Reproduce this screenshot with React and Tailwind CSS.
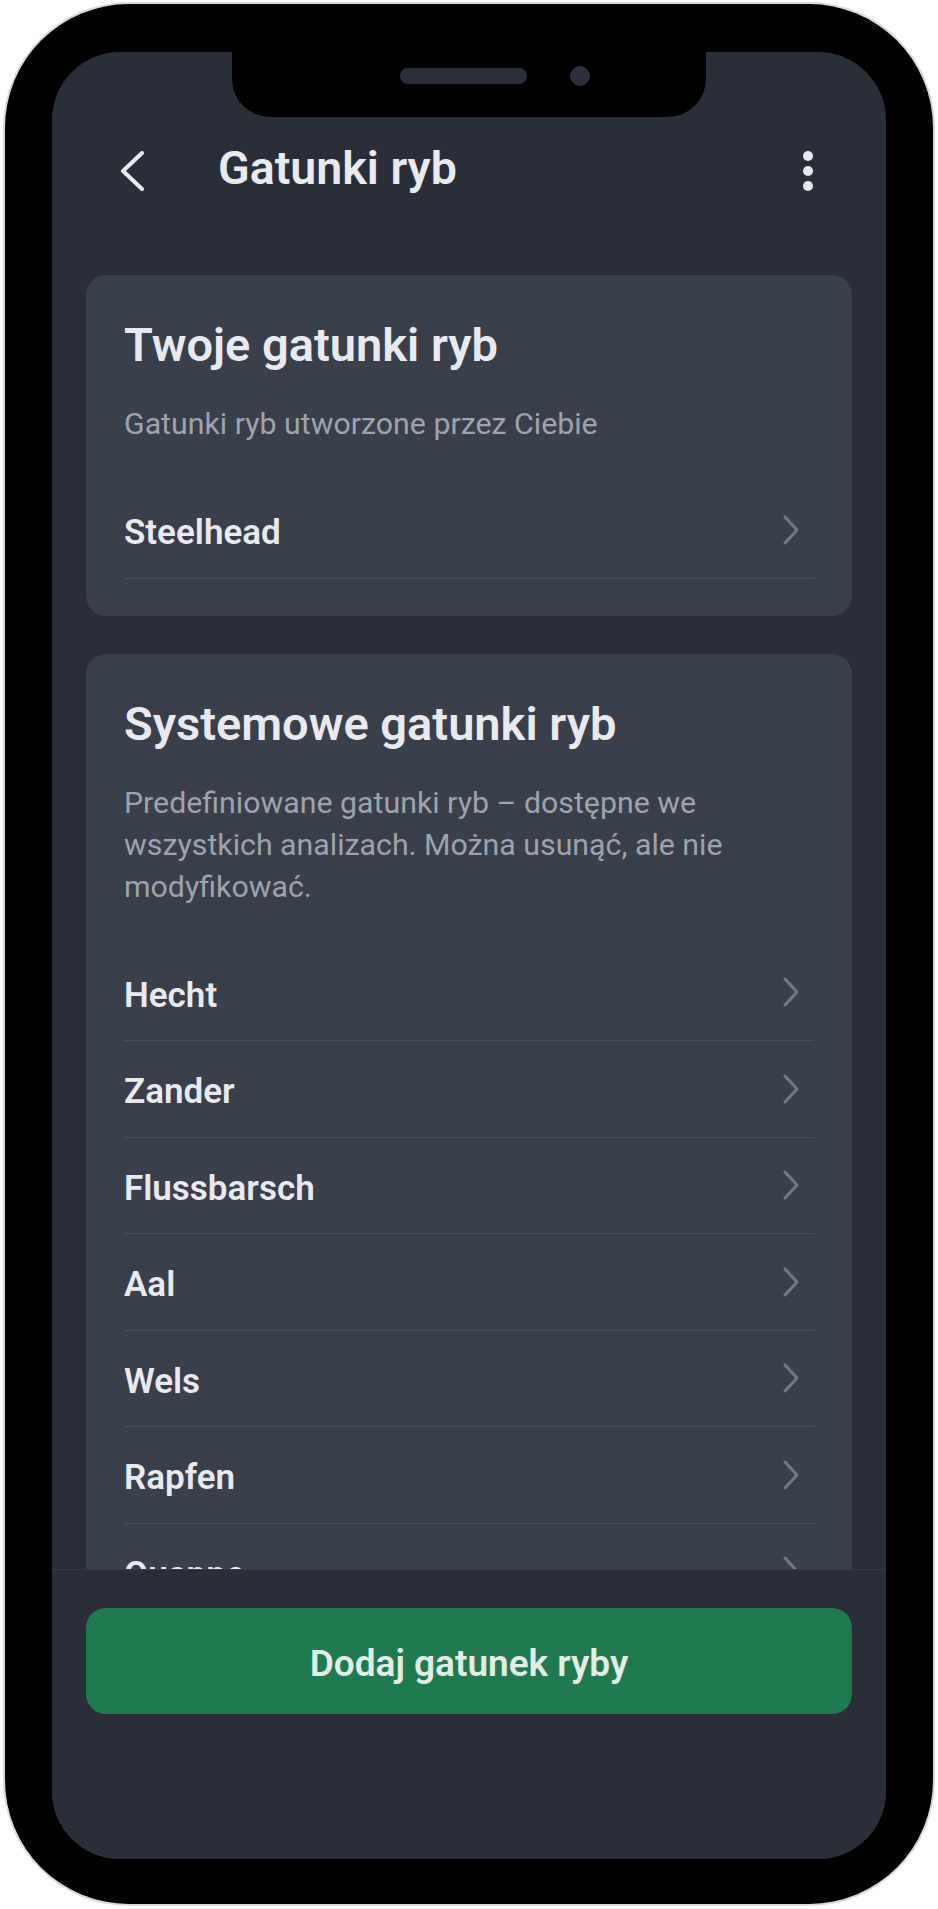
import React from "react";

function RowChevron() {
  return (
    <svg width="18" height="32" viewBox="0 0 18 32" fill="none" className="shrink-0">
      <polyline points="3,3 15,16 3,29" stroke="#737985" strokeWidth="3" strokeLinecap="round" strokeLinejoin="round" />
    </svg>
  );
}

function Row({ label }) {
  return (
    <div className="h-[96.5px] flex items-center justify-between border-b border-[#4b515c] pr-[14px]">
      <span className="mt-[7px] text-[35px] leading-[42px] font-semibold text-[#e8eaf0]">{label}</span>
      <RowChevron />
    </div>
  );
}

export default function App() {
  const system = ["Hecht", "Zander", "Flussbarsch", "Aal", "Wels", "Rapfen", "Quappe", "Karpfen"];
  return (
    <div className="w-[938px] h-[1909px] bg-white pt-[4px] pl-[5px] font-['Roboto','Noto_Sans',sans-serif]">
      <div className="w-[928px] h-[1900px] rounded-[124px] bg-black pt-[48px] px-[47px] shadow-[0_0_0_2px_#d9d9d9]">
        <div className="relative w-[834px] h-[1807px] rounded-[68px] overflow-hidden bg-[#2a2e39] flex flex-col">
          {/* notch */}
          <div className="absolute left-[180px] top-0 w-[474px] h-[65px] bg-black rounded-b-[38px] z-10">
            <div className="absolute left-[168px] top-[16px] w-[127px] h-[16px] rounded-full bg-[#2b2f3b]" />
            <div className="absolute left-[338px] top-[14px] w-[20px] h-[20px] rounded-full bg-[#2b2f3b]" />
          </div>

          {/* header */}
          <div className="pt-[83px] shrink-0">
            <div className="h-[72px] flex items-center pl-[68px] pr-[73px]">
              <svg width="24" height="40" viewBox="0 0 24 40" fill="none" className="shrink-0">
                <polyline points="22,2 3,20 22,38" stroke="#e8eaf0" strokeWidth="4" strokeLinecap="round" strokeLinejoin="round" />
              </svg>
              <div className="flex-1 ml-[74px] mb-[7px] text-[46.5px] leading-[56px] font-semibold text-[#e8eaf0]">
                Gatunki ryb
              </div>
              <div className="flex flex-col gap-[5px]">
                <div className="w-[10px] h-[10px] rounded-full bg-[#e8eaf0]" />
                <div className="w-[10px] h-[10px] rounded-full bg-[#e8eaf0]" />
                <div className="w-[10px] h-[10px] rounded-full bg-[#e8eaf0]" />
              </div>
            </div>
          </div>

          {/* scroll area */}
          <div className="flex-1 min-h-0 overflow-hidden px-[34px] pt-[68px] flex flex-col gap-[38px]">
            <div className="shrink-0 rounded-[20px] bg-[#393f4b] pt-[42px] px-[38px] pb-[37px]">
              <div className="text-[47px] leading-[56px] font-semibold text-[#e8eaf0]">Twoje gatunki ryb</div>
              <div className="mt-[30px] text-[30.3px] leading-[42px] text-[#9ea3ad]">Gatunki ryb utworzone przez Ciebie</div>
              <div className="mt-[37px]">
                <Row label="Steelhead" />
              </div>
            </div>

            <div className="shrink-0 rounded-[20px] bg-[#393f4b] pt-[42px] px-[38px] pb-[37px]">
              <div className="text-[47px] leading-[56px] font-semibold text-[#e8eaf0]">Systemowe gatunki ryb</div>
              <div className="mt-[30px] text-[30.3px] leading-[42px] text-[#9ea3ad]">
                Predefiniowane gatunki ryb – dostępne we
                <br />
                wszystkich analizach. Można usunąć, ale nie
                <br />
                modyfikować.
              </div>
              <div className="mt-[37px]">
                {system.map((s) => (
                  <Row key={s} label={s} />
                ))}
              </div>
            </div>
          </div>

          {/* bottom bar */}
          <div className="h-[290px] shrink-0 border-t border-[#363a46] bg-[#2a2e39] pt-[38px] px-[34px]">
            <button className="w-full h-[106px] rounded-[20px] bg-[#207a50] flex items-center justify-center">
              <span className="mt-[5px] text-[37px] leading-[44px] font-semibold text-[#e3ece6]">Dodaj gatunek ryby</span>
            </button>
          </div>
        </div>
      </div>
    </div>
  );
}
